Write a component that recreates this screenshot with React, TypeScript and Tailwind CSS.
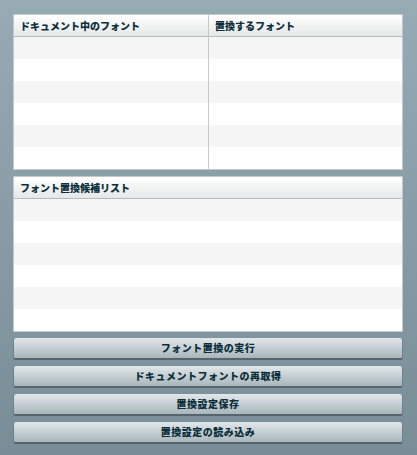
const rows = [0, 1, 2, 3, 4, 5]

const font = { fontFamily: '"Noto Sans CJK JP", "Noto Sans", sans-serif' }

function Header({ children }: { children: React.ReactNode }) {
  return (
    <div className="h-[22px] flex items-center pl-[6px] text-[10px] font-extrabold text-[#0b2f3b] bg-gradient-to-b from-white to-[#e6e7e8] border-b border-[#b3bcc1]">
      {children}
    </div>
  )
}

function Rows() {
  return (
    <>
      {rows.map((i) => (
        <div key={i} className={`h-[22px] ${i % 2 === 0 ? "bg-[#f5f5f5]" : "bg-white"}`} />
      ))}
    </>
  )
}

function ActionButton({ label }: { label: string }) {
  return (
    <button className="h-[22px] w-full rounded-[3px] bg-gradient-to-b from-[#e2e7e9] to-[#a9b6bc] border-b-2 border-[#56656c] border-l border-l-[#6f7f86] border-r border-r-[#6f7f86] text-[10px] font-extrabold text-[#0b2f3b] flex items-center justify-center tracking-[0.5px]">
      {label}
    </button>
  )
}

export default function App() {
  const buttons = ["フォント置換の実行", "ドキュメントフォントの再取得", "置換設定保存", "置換設定の読み込み"]

  return (
    <div style={font} className="w-[417px] h-[455px] bg-gradient-to-b from-[#97abb5] to-[#788d97] pt-[14px] pl-[13px] pr-[14px] leading-none">
      {/* Font table */}
      <div className="border border-[#c4c8ca] bg-white grid grid-cols-[195px_1fr]">
        <div className="border-r border-[#c8c8c8]">
          <Header>ドキュメント中のフォント</Header>
          <Rows />
        </div>
        <div>
          <Header>置換するフォント</Header>
          <Rows />
        </div>
      </div>

      {/* Candidate list */}
      <div className="mt-[6px] border border-[#c4c8ca] bg-white">
        <Header>フォント置換候補リスト</Header>
        <Rows />
      </div>

      {/* Actions */}
      <div className="mt-[6px] flex flex-col gap-[6px]">
        {buttons.map((b) => (
          <ActionButton key={b} label={b} />
        ))}
      </div>
    </div>
  )
}
